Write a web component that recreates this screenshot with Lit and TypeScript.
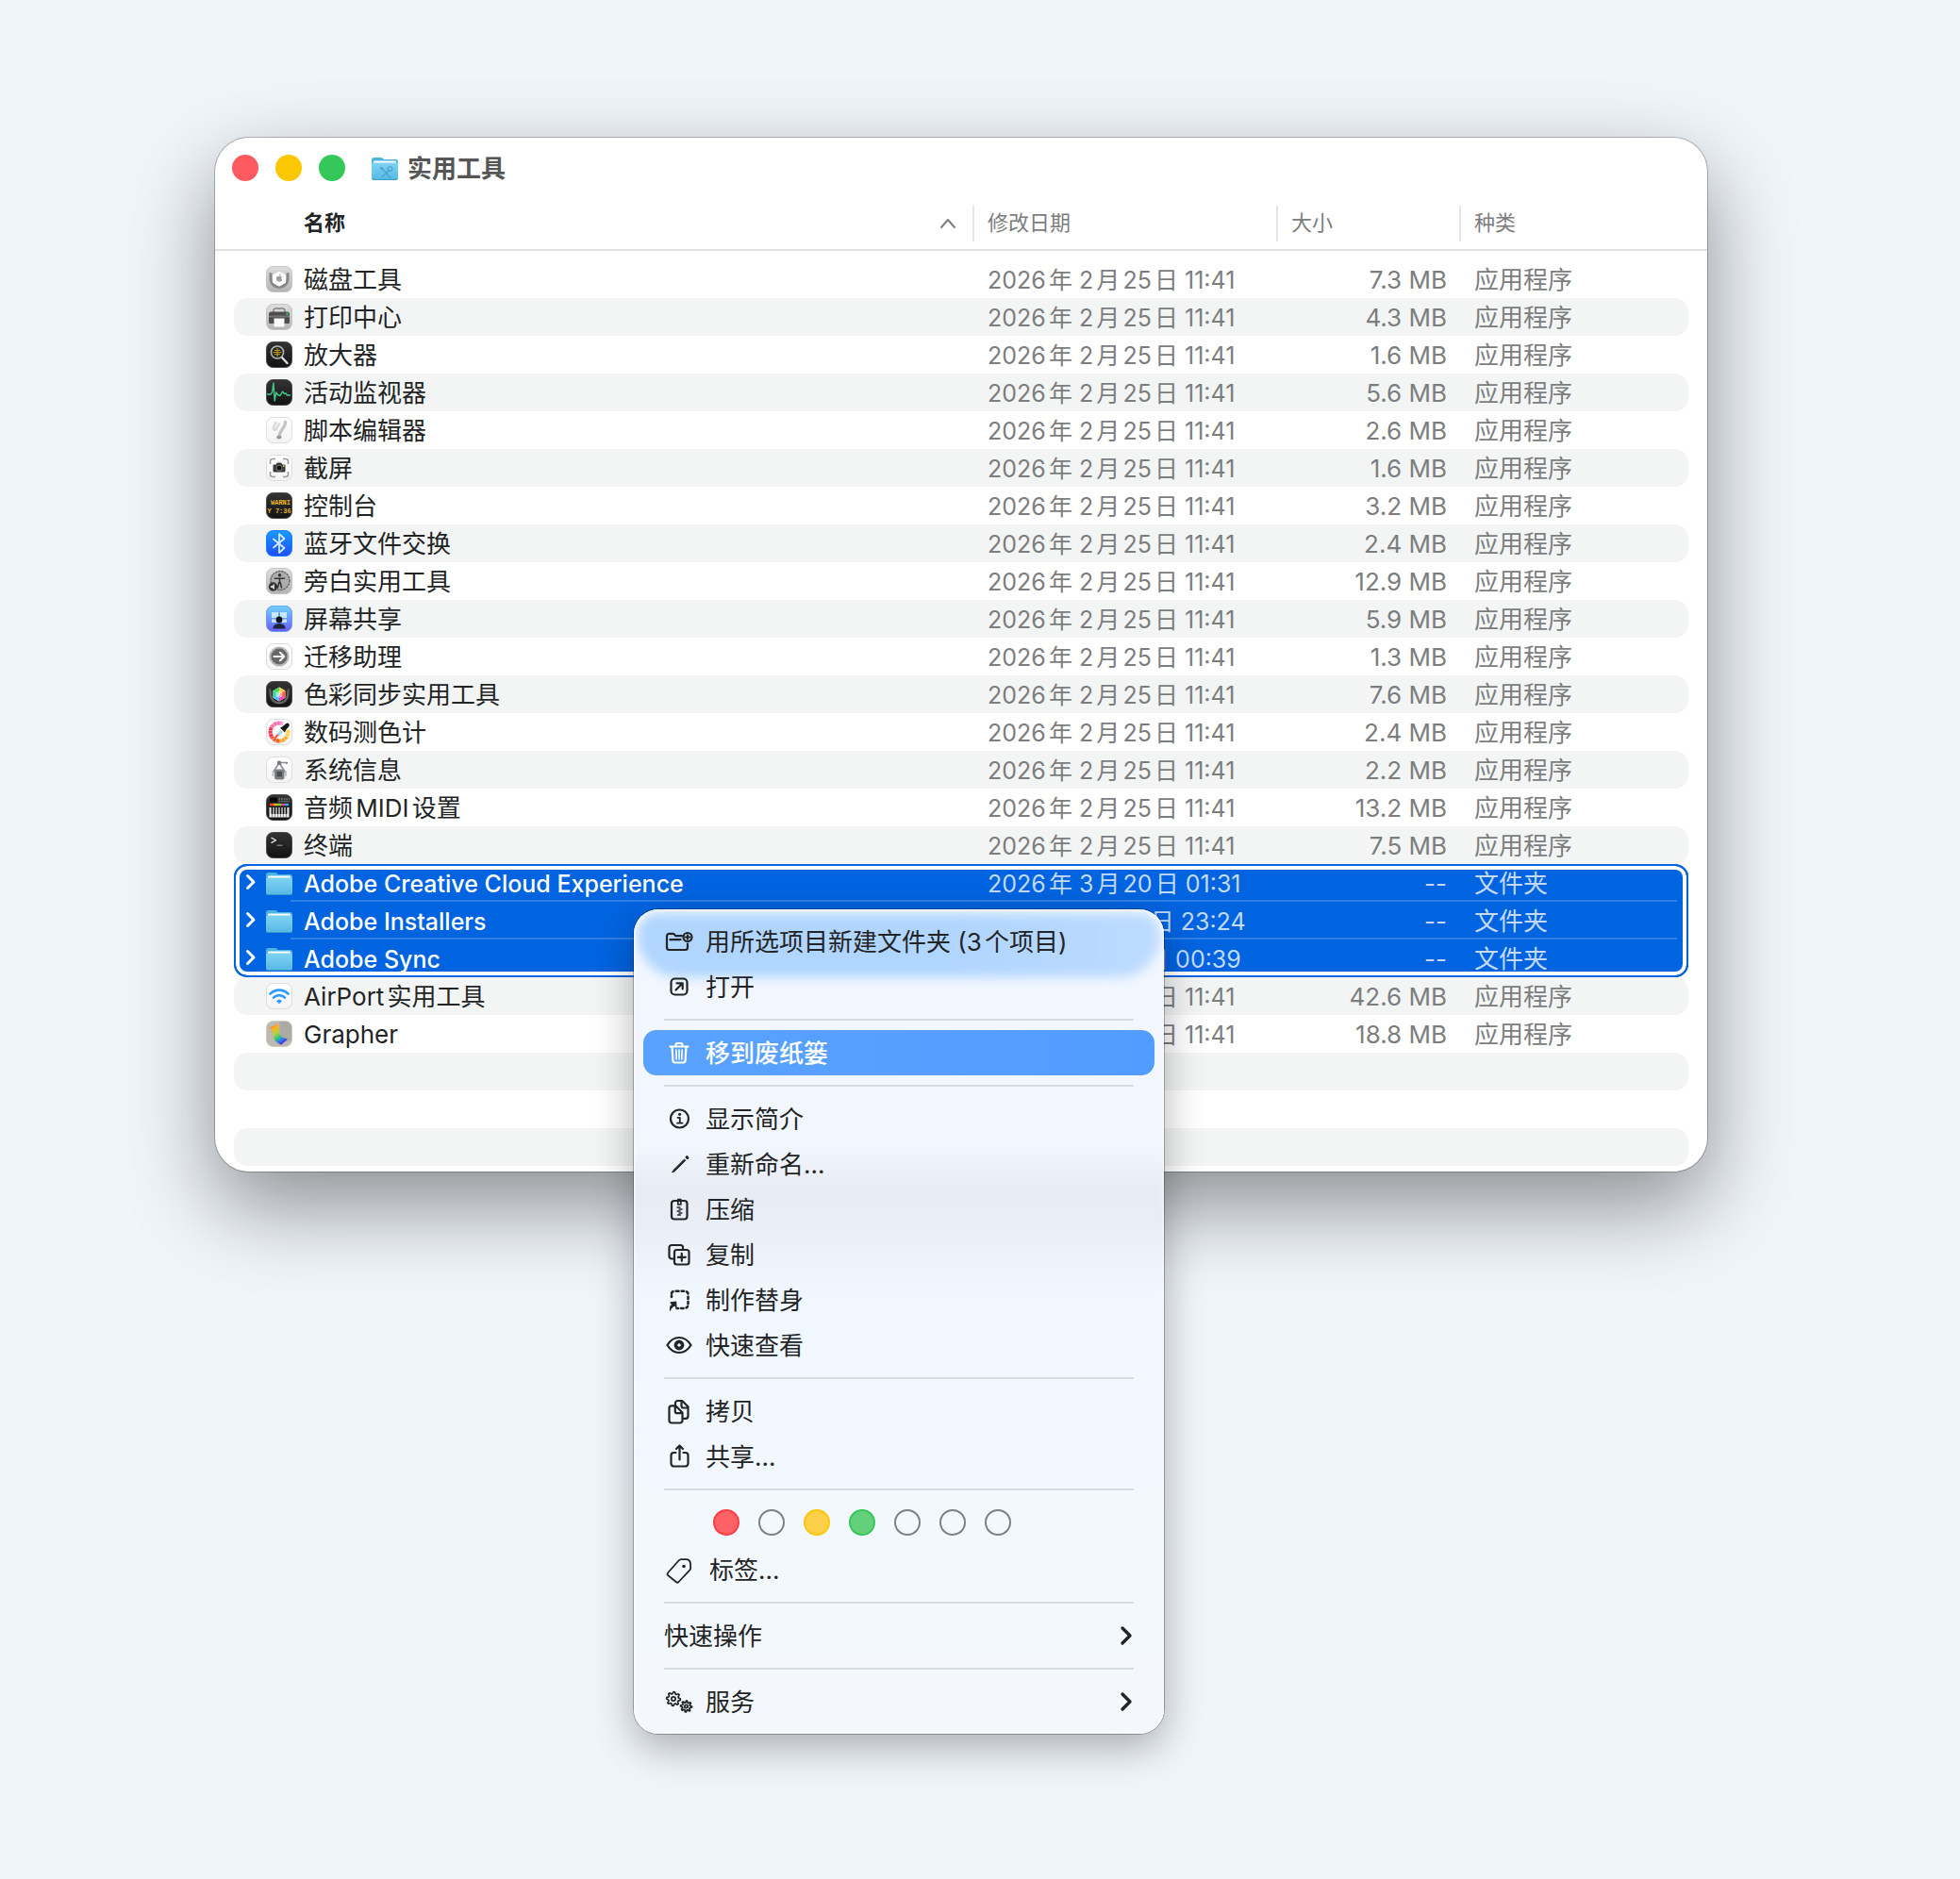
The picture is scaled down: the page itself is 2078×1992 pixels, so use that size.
import { LitElement, html, svg, css, nothing, TemplateResult } from "lit";
import { customElement, state } from "lit/decorators.js";
import { classMap } from "lit/directives/class-map.js";

interface Entry {
  name: string;
  icon: string;
  date: string;
  size: string;
  kind: string;
}

const STAMP = "2026年 2月25日 11:41";
const app = (name: string, icon: string, size: string): Entry => ({
  name,
  icon,
  date: STAMP,
  size,
  kind: "应用程序",
});
const folder = (name: string, date: string): Entry => ({
  name,
  icon: "folder",
  date,
  size: "--",
  kind: "文件夹",
});

const BEFORE: Entry[] = [
  app("磁盘工具", "disk", "7.3 MB"),
  app("打印中心", "print", "4.3 MB"),
  app("放大器", "magnify", "1.6 MB"),
  app("活动监视器", "activity", "5.6 MB"),
  app("脚本编辑器", "script", "2.6 MB"),
  app("截屏", "capture", "1.6 MB"),
  app("控制台", "console", "3.2 MB"),
  app("蓝牙文件交换", "bluetooth", "2.4 MB"),
  app("旁白实用工具", "voice", "12.9 MB"),
  app("屏幕共享", "screen", "5.9 MB"),
  app("迁移助理", "migrate", "1.3 MB"),
  app("色彩同步实用工具", "colorsync", "7.6 MB"),
  app("数码测色计", "meter", "2.4 MB"),
  app("系统信息", "sysinfo", "2.2 MB"),
  app("音频MIDI设置", "midi", "13.2 MB"),
  app("终端", "terminal", "7.5 MB"),
];
const SELECTED: Entry[] = [
  folder("Adobe Creative Cloud Experience", "2026年 3月20日 01:31"),
  folder("Adobe Installers", "2026年 3月10日 23:24"),
  folder("Adobe Sync", "2026年 3月11日 00:39"),
];
const AFTER: Entry[] = [
  app("AirPort实用工具", "airport", "42.6 MB"),
  app("Grapher", "grapher", "18.8 MB"),
];

const tile = (fill: string, edge = "#00000030") => svg`
  <rect x="2.5" y="2.5" width="27" height="27" rx="7" fill=${fill} stroke=${edge} />`;

const folderShape = svg`
  <path d="M2 7.500a2.500 2.500 0 0 1 2.500-2.500h7.200c.8 0 1.300.2 1.900.7l1.700 1.300h12.200A2.500 2.500 0 0 1 30 9.500V20H2z" fill="#4fb4e0" />
  <rect x="4" y="8.500" width="24" height="8" rx="1" fill="#fdfeff" />
  <path d="M2 11.500a1 1 0 0 1 1-1h26a1 1 0 0 1 1 1v15a2.500 2.500 0 0 1-2.500 2.500h-23A2.500 2.500 0 0 1 2 26.500z" fill="url(#g-folder)" />
  <path d="M2.500 27a2.200 2.200 0 0 0 2 1.500h23a2.200 2.200 0 0 0 2-1.500" fill="none" stroke="#3f9cc8" />`;

const ICONS: Record<string, TemplateResult> = {
  disk: svg`${tile("url(#g-gray)", "#c4c4c4")}
    <path d="M5.500 9v6.500a10.500 10.500 0 0 0 21 0V9l-3 .5v6a7.500 7.500 0 0 1-15 0v-6z" fill="#868686" />
    <path d="M16 8.200l6.600 3.600v7.600L16 23.200l-6.600-3.800v-7.600z" fill="#fff" stroke="#fff" stroke-linejoin="round" />
    <path d="M16 13c1-.8 2.500-.4 3 .5-1.100.8-1 2.400.3 3-.5 1.300-1.200 2.300-2.100 2.100-.8-.3-1.300-.3-2.100 0-1.400.3-2.800-3.200-1.800-4.900.6-1 1.700-1 2.700-.7zM16 12.300c0-1 .8-1.900 1.800-2 0 1.100-.8 2-1.800 2z" fill="#a0a0a0" />`,
  print: svg`${tile("url(#g-gray)", "#c4c4c4")}
    <rect x="10" y="7" width="12" height="7" rx="2" fill="#d4d4d4" stroke="#5d5d5d" />
    <path d="M7.500 10.500h17a2.500 2.500 0 0 1 2.500 2.500v8.500a1.500 1.500 0 0 1-1.500 1.500h-19A1.500 1.500 0 0 1 5 21.500V13a2.500 2.500 0 0 1 2.500-2.500z" fill="#4d4d4d" />
    <rect x="5" y="14.500" width="22" height="2" fill="#757575" />
    <circle cx="24.500" cy="12.800" r="1.300" fill="#2fc45c" />
    <rect x="10.500" y="17.500" width="11" height="9" fill="#fafafa" />`,
  magnify: svg`${tile("url(#g-dark)", "#4b4b4b")}
    <path d="M18.500 18.500l6 6.500" stroke="#dcdcdc" stroke-width="2.400" stroke-linecap="round" />
    <circle cx="14" cy="13.500" r="6.600" fill="#2b2b27" stroke="#b9b9b9" stroke-width="1.500" />
    <path d="M9.500 13.500h9M14 9v9M11 11.500h6M11 15.500h6" stroke="#b3921a" stroke-width="1.200" />`,
  activity: svg`${tile("url(#g-dark)", "#4b4b4b")}
    <path d="M3 18h4l1.500-2L10 6l1.200 19 1.600-9 1.700 2.500 2.500 1 2.500-4.500 2 2.500 1.500-.5 1.500 2H28" fill="none" stroke="#3fc98a" stroke-width="1.400" stroke-linejoin="round" />`,
  script: svg`${tile("url(#g-white)", "#dedede")}
    <path d="M12.500 8c-2 3-3.500 6-2 7.500 2 1.500 3-3 5.500-6" fill="none" stroke="#dadada" stroke-width="2.600" stroke-linecap="round" />
    <path d="M22.500 7.500c1 4-5 7.500-6.500 14.500" fill="none" stroke="#c4c4c4" stroke-width="3.400" stroke-linecap="round" />
    <ellipse cx="15.800" cy="23.500" rx="2.600" ry="2" fill="#989898" />`,
  capture: svg`${tile("url(#g-white)", "#dedede")}
    <path d="M6.500 12V9a2.500 2.500 0 0 1 2.500-2.500h3M20 6.500h3A2.500 2.500 0 0 1 25.500 9v3M25.500 20v3a2.500 2.500 0 0 1-2.500 2.500h-3M12 25.500H9A2.500 2.500 0 0 1 6.500 23v-3" fill="none" stroke="#9c9c9c" stroke-width="1.600" />
    <path d="M10.500 12.500h2.200l1.100-2h4.400l1.100 2h2.200a1 1 0 0 1 1 1v6a1 1 0 0 1-1 1h-11a1 1 0 0 1-1-1v-6a1 1 0 0 1 1-1z" fill="#3a3a3a" />
    <circle cx="16" cy="16" r="3" fill="#111" stroke="#777" />
    <circle cx="20.800" cy="14" r=".9" fill="#e9c63d" />`,
  console: svg`${tile("url(#g-dark)", "#4b4b4b")}
    <text x="7" y="14.500" class="tiny">WARNI</text>
    <text x="3.500" y="23.500" class="tiny">Y 7:36</text>`,
  bluetooth: svg`${tile("url(#g-blue)", "#1f7bf5")}
    <path d="M10 11.500l11.500 9.500-5.500 5V6l5.500 5L10 20.500" fill="none" stroke="#d9ecff" stroke-width="1.700" stroke-linejoin="round" stroke-linecap="round" />`,
  voice: svg`${tile("url(#g-gray)", "#c4c4c4")}
    <circle cx="17" cy="15.500" r="10" fill="#adadad" stroke="#666" stroke-width="1.400" stroke-dasharray="2.500 .7" />
    <circle cx="16.500" cy="9.800" r="1.700" fill="#333" />
    <path d="M11.500 13.200h10M16.500 13.200v4.800M15.800 17.500l-1.300 5.500M17.200 17.500l1.300 5.500" stroke="#333" stroke-width="1.500" stroke-linecap="round" />
    <circle cx="9.500" cy="22" r="4.700" fill="#333" />
    <path d="M7 21h1.500l2.500-2v6l-2.500-2H7z" fill="#d5d5d5" />`,
  screen: svg`${tile("url(#g-screen)", "#6b9df0")}
    <path d="M8 9h7v6H8zM17 9h7v6h-7zM8 16.500h7V20H8zM17 16.500h7V20h-7z" fill="#d7f2ff" opacity=".85" />
    <circle cx="16" cy="17" r="3.400" fill="#10131c" />
    <path d="M9.500 26.500c0-4 3-5.300 6.500-5.300s6.500 1.300 6.500 5.300z" fill="#1c2440" />`,
  migrate: svg`${tile("url(#g-white)", "#dedede")}
    <circle cx="16" cy="16" r="10.500" fill="#b5b5b5" />
    <circle cx="16" cy="16" r="8.500" fill="#686868" />
    <path d="M10.500 16h10.500M17 11.800l4.300 4.200-4.300 4.200" fill="none" stroke="#fff" stroke-width="2" stroke-linecap="round" stroke-linejoin="round" />`,
  colorsync: svg`${tile("url(#g-dark)", "#4b4b4b")}
    <path d="M5.500 9v7a10.500 10.500 0 0 0 21 0V9c-2 2-2.500 4-2.500 7a8 8 0 0 1-16 0c0-3-.5-5-2.500-7z" fill="#626262" />
    <path d="M16 8.500l6.500 3.700v7.600L16 23.500l-6.500-3.700v-7.600z" fill="#f7f7f7" />
    <path d="M16 8.500V16l-6.500-3.800z" fill="#35dd55" /><path d="M16 8.500V16l6.500-3.800z" fill="#ffc94a" />
    <path d="M9.500 12.200L16 16l-6.500 3.800z" fill="#38d9a6" /><path d="M22.500 12.200L16 16l6.500 3.800z" fill="#ff5a3d" />
    <path d="M9.500 19.800L16 16v7.500z" fill="#4fc3f5" /><path d="M22.500 19.800L16 16v7.500z" fill="#f24ab8" />
    <circle cx="16" cy="16" r="3.500" fill="#fff" opacity=".5" />`,
  meter: svg`${tile("url(#g-white)", "#dedede")}
    <path d="M16 6.500a9.500 9.500 0 0 1 4 .9" stroke="#ff8bd0" class="arc" />
    <path d="M8 11a9.500 9.500 0 0 1 8-4.500" stroke="#ff6aa8" class="arc" />
    <path d="M8 21a9.500 9.500 0 0 1 0-10" stroke="#ff2f55" class="arc" />
    <path d="M16 25.500A9.500 9.500 0 0 1 8 21" stroke="#ff5a2b" class="arc" />
    <path d="M24 21a9.500 9.500 0 0 1-8 4.500" stroke="#ffa62b" class="arc" />
    <path d="M25.200 14a9.500 9.500 0 0 1-1.200 7" stroke="#ffd23c" class="arc" />
    <path d="M10.500 22l7-7.500 2 2-7.500 6.500z" fill="#ff4c3b" />
    <path d="M14 18l4-4 2 2-4 4z" fill="#9fdcf5" />
    <path d="M17 11.500l5 5 1-2.500 3.200-3.800a2 2 0 0 0-3-2.900l-3.700 3z" fill="#181818" />`,
  sysinfo: svg`${tile("url(#g-white)", "#dedede")}
    <path d="M15.500 9.500L10 18M16.500 9.500L22 18M16 8.500h8" stroke="#8f9296" stroke-width="1.700" stroke-linecap="round" />
    <circle cx="16" cy="8.800" r="2.200" fill="#73777b" />
    <circle cx="24" cy="8.800" r="1" fill="#73777b" />
    <rect x="11" y="15.500" width="10.500" height="11" rx="2.500" fill="#7b7f84" />
    <rect x="13.500" y="18" width="5.500" height="5.500" rx="1" fill="#4a4d51" />
    <path d="M9.500 17.500v5.500M23 17.500v5.500" stroke="#b4b7ba" stroke-width="1.600" />`,
  midi: svg`${tile("url(#g-dark)", "#4b4b4b")}
    <rect x="6" y="5.500" width="8" height="5" fill="#050505" />
    <path d="M15.500 7H27M15.500 9.500H27" stroke="#777" stroke-width="1.500" stroke-dasharray="1.800 .8" />
    <path d="M6 13h4" stroke="#ff3a2e" stroke-width="2.400" /><path d="M10 13h4" stroke="#ffa51f" stroke-width="2.400" />
    <path d="M14 13h4" stroke="#6fdc39" stroke-width="2.400" /><path d="M18 13h4" stroke="#ff3f8e" stroke-width="2.400" />
    <path d="M22 13h4" stroke="#2aa8ff" stroke-width="2.400" />
    <rect x="5.500" y="16" width="21" height="10.500" fill="#e9e9e9" />
    <path d="M8.500 16v7M11.500 16v7M14.500 16v7M17.500 16v7M20.500 16v7M23.500 16v7" stroke="#111" stroke-width="1.700" />
    <path d="M8.500 23v3.500M11.500 23v3.500M14.500 23v3.500M17.500 23v3.500M20.500 23v3.500M23.500 23v3.500" stroke="#666" stroke-width=".6" />`,
  terminal: svg`${tile("url(#g-dark)", "#4b4b4b")}
    <path d="M7.500 8l5 2.800-5 2.800" fill="none" stroke="#eee" stroke-width="1.300" stroke-linejoin="round" />
    <path d="M13.500 16.200h6" stroke="#8b8b8b" stroke-width="1.200" />`,
  airport: svg`${tile("url(#g-white)", "#dedede")}
    <path d="M6.500 13.500a13.500 13.500 0 0 1 19 0M10 17.600a8.500 8.500 0 0 1 12 0" fill="none" stroke="#2e9bff" stroke-width="2.600" stroke-linecap="round" />
    <path d="M13 21.200a4.300 4.300 0 0 1 6 0l-3 3z" fill="#2e9bff" />`,
  grapher: svg`${tile("#bdb9b0", "#cfccc6")}
    <path d="M16.500 3h6.500a6 6 0 0 1 6 6v14l-12.500 3z" fill="#adaaa3" />
    <path d="M6 9.500l9-4c1.500 4-.5 7 1.500 11 1.500 3 4.500 4 8.500 5l-6.500 6c-3.500-.5-7.500-4-8.500-8s-.5-7-4-10z" fill="url(#g-rain)" />`,
  folder: folderShape,
  utilities: svg`${folderShape}
    <path d="M12.500 16l9.500 10.500M20.500 18.500l-7 6.500" fill="none" stroke="#3f8fc0" stroke-width="1.500" stroke-linecap="round" opacity=".6" />
    <circle cx="21.500" cy="17" r="2.400" fill="none" stroke="#3f8fc0" stroke-width="1.400" opacity=".6" />
    <circle cx="12.500" cy="16.500" r="1.800" fill="#3f8fc0" opacity=".5" />`,
};

const DEFS = html`<svg class="defs" width="0" height="0" aria-hidden="true">
  <defs>
    <linearGradient id="g-gray" x2="0" y2="1"><stop stop-color="#dedede" /><stop offset="1" stop-color="#b3b3b3" /></linearGradient>
    <linearGradient id="g-white" x2="0" y2="1"><stop stop-color="#ffffff" /><stop offset="1" stop-color="#f3f3f4" /></linearGradient>
    <linearGradient id="g-dark" x2="0" y2="1"><stop stop-color="#333333" /><stop offset="1" stop-color="#131313" /></linearGradient>
    <linearGradient id="g-blue" x2="0" y2="1"><stop stop-color="#1a9bff" /><stop offset="1" stop-color="#1c4dfb" /></linearGradient>
    <linearGradient id="g-screen" x2="0" y2="1"><stop stop-color="#6fd3ff" /><stop offset="1" stop-color="#6a5cf5" /></linearGradient>
    <linearGradient id="g-folder" x2="0" y2="1"><stop stop-color="#7fd3f3" /><stop offset="1" stop-color="#54b8e4" /></linearGradient>
    <linearGradient id="g-rain" x2=".6" y2="1">
      <stop stop-color="#ff4a1c" /><stop offset=".25" stop-color="#ffb01f" /><stop offset=".5" stop-color="#a9d637" />
      <stop offset=".7" stop-color="#34c27a" /><stop offset=".85" stop-color="#2f7df0" /><stop offset="1" stop-color="#4f30e0" />
    </linearGradient>
  </defs>
</svg>`;

const gear = (cx: number, cy: number, r: number) => {
  let d = "";
  for (let i = 0; i < 32; i++) {
    const rr = i % 4 < 2 ? r + 1 : r - 1;
    const a = (i / 32) * Math.PI * 2;
    d += `${i ? "L" : "M"}${(cx + rr * Math.cos(a)).toFixed(2)} ${(cy + rr * Math.sin(a)).toFixed(2)}`;
  }
  return svg`<path d=${d + "z"} stroke-width="1.700" /><circle cx=${cx} cy=${cy} r=${r / 3} stroke-width="1.700" />`;
};

const GLYPHS: Record<string, TemplateResult> = {
  newFolder: svg`<path d="M19 10.200H12.500l-1.700-1.700c-.4-.4-.8-.6-1.400-.6H5.500A2.500 2.500 0 0 0 3 10.400v12.100A2.500 2.500 0 0 0 5.500 25h17a2.500 2.500 0 0 0 2.500-2.500V18.500M6.500 14.200h11" />
    <circle cx="25" cy="11.500" r="4.500" /><path d="M25 9.200v4.600M22.700 11.500h4.600" stroke-width="1.900" />`,
  open: svg`<rect x="7.500" y="7.500" width="17" height="17" rx="4" /><path d="M12.500 19.500l6.500-6.500M13.500 12.300h6.200V18.500" />`,
  trash: svg`<path d="M6.500 9.500h19M12.500 9V7.500A1.500 1.500 0 0 1 14 6h4a1.500 1.500 0 0 1 1.500 1.500V9M8.500 10l1 14.700a2 2 0 0 0 2 1.800h9a2 2 0 0 0 2-1.800l1-14.700" />
    <path d="M12.800 13l.4 10M16 13v10M19.200 13l-.4 10" stroke-width="1.600" />`,
  info: svg`<circle cx="16.500" cy="16" r="9.500" /><path d="M14.500 14.800h2.300v5.700M14 20.700h5.500" stroke-width="1.800" /><circle cx="16.600" cy="11.300" r="1.600" class="solid" />`,
  pencil: svg`<path d="M10 22.500L21.500 11l1.300 1.300L11.300 23.800l-2.300.9z" class="solid edge" /><path d="M24.200 8.800l.6.600" stroke-width="3.200" />`,
  zip: svg`<rect x="8" y="7" width="16.500" height="19.500" rx="3" /><path d="M14.800 5.500h3v5.500h-3z" stroke-width="1.700" />
    <path d="M14 14h3M16 16h3M14 18h3M16 20h3M14.500 22h3" stroke-width="1.300" />`,
  duplicate: svg`<path d="M10.500 20.500H8A2.500 2.500 0 0 1 5.500 18V8.500A2.500 2.500 0 0 1 8 6h9.500A2.500 2.500 0 0 1 20 8.500V10.500" /><rect x="11" y="11" width="15.500" height="15.500" rx="2.500" /><path d="M18.800 14.800v8M14.800 18.800h8" />`,
  alias: svg`<path d="M8 13v-1.500M8 9.300a3 3 0 0 1 1.500-2.200M12.700 6.700h2.800M18.700 6.700h2.300M24 7.300a3 3 0 0 1 1.500 2.200M25.500 12.700v2.300M25.500 18v2.300M25 23a3 3 0 0 1-1.500 1.500M20.500 25h-2.300M15.200 25h-1.700" stroke-width="2.600" />
    <path d="M6.500 27c-.5-3 .3-5 2-6l-1.700-2.200 6-.8.2 6-1.900-1.700c-1.700.7-3 2-4.600 4.700z" class="solid edge" />`,
  eye: svg`<path d="M3.500 16c3-5 7.300-8 12.500-8s9.500 3 12.500 8c-3 5-7.300 8-12.500 8S6.500 21 3.500 16z" /><circle cx="16" cy="16" r="3.600" stroke-width="3.600" />`,
  copy: svg`<path d="M12 9.500V7.500A2.500 2.500 0 0 1 14.500 5h4.700l6.300 6.300v10A2.500 2.500 0 0 1 23 23.800h-2M18.500 5.500v5a2 2 0 0 0 2 2H25" />
    <path d="M8 10.300h4.200l7.300 7.200v8.500a2.500 2.500 0 0 1-2.500 2.500H8A2.500 2.500 0 0 1 5.500 26V12.800A2.500 2.500 0 0 1 8 10.300zM11.800 10.500v5.700a2 2 0 0 0 2 2h5.500" />`,
  share: svg`<path d="M12.500 12h-2a3 3 0 0 0-3 3v8.500a3 3 0 0 0 3 3h12a3 3 0 0 0 3-3V15a3 3 0 0 0-3-3h-2M16.500 19.500V5M13 8l3.500-3.500L20 8" />`,
  tag: svg`<path d="M4 19.500L15.500 6.500a4 4 0 0 1 2.700-1.300l4.800-.1a4.500 4.500 0 0 1 5 4.500l.2 4.300a4 4 0 0 1-1.200 3L15.500 29a2 2 0 0 1-2.800 0l-8.600-7a1.800 1.800 0 0 1-.1-2.500z" stroke-width="1.800" /><circle cx="21" cy="12.500" r="1.800" class="solid" />`,
  gears: svg`${gear(10, 13, 6.4)}${gear(23.500, 21, 5)}`,
};

interface Item {
  label: string;
  glyph?: string;
  more?: boolean;
}
const GROUPS: Item[][] = [
  [
    { label: "用所选项目新建文件夹 (3个项目)", glyph: "newFolder" },
    { label: "打开", glyph: "open" },
  ],
  [{ label: "移到废纸篓", glyph: "trash" }],
  [
    { label: "显示简介", glyph: "info" },
    { label: "重新命名...", glyph: "pencil" },
    { label: "压缩", glyph: "zip" },
    { label: "复制", glyph: "duplicate" },
    { label: "制作替身", glyph: "alias" },
    { label: "快速查看", glyph: "eye" },
  ],
  [
    { label: "拷贝", glyph: "copy" },
    { label: "共享...", glyph: "share" },
  ],
  [{ label: "标签...", glyph: "tag" }],
  [{ label: "快速操作", more: true }],
  [{ label: "服务", glyph: "gears", more: true }],
];
const TAGS = [
  { name: "红色", tone: "red", on: true },
  { name: "橙色", tone: "orange", on: false },
  { name: "黄色", tone: "yellow", on: true },
  { name: "绿色", tone: "green", on: true },
  { name: "蓝色", tone: "blue", on: false },
  { name: "紫色", tone: "purple", on: false },
  { name: "灰色", tone: "gray", on: false },
];

@customElement("app-root")
export class AppRoot extends LitElement {
  @state() private active = "移到废纸篓";

  static styles = css`
    :host {
      display: block;
      box-sizing: border-box;
      min-height: 100vh;
      padding: 146px 268px 146px 228px;
      background: #f0f5fa;
      color: #222425;
      font: 400 26px/40px Inter, "Noto Sans CJK SC", sans-serif;
      text-autospace: normal;
    }
    *,
    *::before,
    *::after {
      box-sizing: border-box;
    }
    button {
      margin: 0;
      padding: 0;
      border: 0;
      background: none;
      color: inherit;
      font: inherit;
      text-align: left;
      text-autospace: inherit;
    }
    .defs {
      position: absolute;
    }
    .window {
      position: relative;
      padding-bottom: 6px;
      border-radius: 36px;
      background: #fff;
      box-shadow: 0 0 0 1px #0000003d, 0 36px 90px #0000006b;
    }
    .titlebar {
      display: flex;
      align-items: center;
      height: 64px;
      padding-left: 18px;
    }
    .lights {
      display: flex;
      gap: 18px;
      margin-right: 26px;
    }
    .light {
      width: 28px;
      height: 28px;
      border-radius: 50%;
    }
    .light.close {
      background: #ff5a5f;
    }
    .light.min {
      background: #fbc700;
    }
    .light.zoom {
      background: #34c759;
    }
    .titlebar h1 {
      margin: 0 0 0 8px;
      padding-top: 2px;
      font-size: 26px;
      font-weight: 700;
      color: #555;
    }
    .icon {
      display: block;
      flex: none;
      width: 32px;
      height: 32px;
    }
    .tiny {
      font: 700 7px "Liberation Mono", monospace;
      fill: #e8b825;
    }
    .arc {
      fill: none;
      stroke-width: 4;
      stroke-dasharray: 3 0.5;
    }

    table {
      width: 100%;
      table-layout: fixed;
      border-collapse: separate;
      border-spacing: 0;
    }
    .c-date {
      width: 322px;
    }
    .c-size {
      width: 194px;
    }
    .c-kind {
      width: 263px;
    }
    th {
      height: 56px;
      padding: 0;
      border-bottom: 2px solid #e0e1e1;
      font-size: 22px;
      font-weight: 400;
      line-height: 36px;
      color: #7c7d7e;
      text-align: left;
    }
    .head {
      display: flex;
      align-items: center;
      justify-content: space-between;
      width: 100%;
      height: 38px;
      padding: 0 0 2px 14px;
      border-left: 2px solid #e4e5e5;
    }
    .head.first {
      padding: 0 18px 2px 94px;
      border-left: 0;
      font-weight: 700;
      color: #222425;
    }
    .caret {
      width: 16px;
      height: 16px;
      fill: none;
      stroke: #7c7d7e;
      stroke-width: 2;
      stroke-linecap: round;
      stroke-linejoin: round;
    }
    thead + tbody::before {
      content: "";
      display: block;
      height: 10px;
    }
    td {
      height: 40px;
      padding: 2px 0 0 16px;
      background-clip: padding-box;
      line-height: 38px;
      color: #7c7d7e;
      white-space: nowrap;
    }
    td:first-child {
      padding: 0;
      border-left: 20px solid transparent;
      border-radius: 34px 0 0 34px / 14px 0 0 14px;
      color: #222425;
    }
    td:last-child {
      border-right: 20px solid transparent;
      border-radius: 0 34px 34px 0 / 0 14px 14px 0;
    }
    td.date {
      font-size: 25px;
    }
    td.size {
      padding: 2px 13px 0 0;
      text-align: right;
    }
    .stripe td {
      background-color: #f3f5f4;
    }
    .name {
      display: flex;
      align-items: center;
      height: 40px;
      padding-left: 8px;
    }
    .title {
      padding-top: 2px;
    }
    .toggle {
      flex: none;
      width: 20px;
      height: 32px;
      margin-right: 4px;
    }
    .toggle svg {
      display: block;
      width: 20px;
      height: 32px;
      fill: none;
      stroke: #fff;
      stroke-width: 3;
      stroke-linecap: round;
      stroke-linejoin: round;
    }
    .name .icon {
      margin-right: 10px;
    }
    .picked {
      position: relative;
    }
    .picked::after {
      content: "";
      position: absolute;
      inset: 0 20px;
      border: 2px solid #0064e1;
      border-radius: 14px;
      box-shadow: inset 0 0 0 4px #fff;
      pointer-events: none;
    }
    .picked td {
      background-color: #0064e1;
      background-origin: padding-box;
      background-position: left bottom;
      background-repeat: no-repeat;
      background-size: 100% 2px;
      border-radius: 0;
      color: #c3dafa;
    }
    .picked tr:not(:last-child) td {
      background-image: linear-gradient(#ffffff2e, #ffffff2e);
    }
    .picked td:first-child {
      background-position: right bottom;
      background-size: calc(100% - 60px) 2px;
      color: #fff;
      font-size: 25px;
      font-weight: 500;
    }
    .picked td:last-child {
      background-size: calc(100% - 12px) 2px;
    }
    .picked tr:first-child td:first-child {
      border-top-left-radius: 34px 14px;
    }
    .picked tr:first-child td:last-child {
      border-top-right-radius: 34px 14px;
    }
    .picked tr:last-child td:first-child {
      border-bottom-left-radius: 34px 14px;
    }
    .picked tr:last-child td:last-child {
      border-bottom-right-radius: 34px 14px;
    }

    .menu {
      position: absolute;
      left: 444px;
      top: 818px;
      width: 562px;
      padding: 10px;
      border-radius: 26px;
      background: linear-gradient(#f2f7ff 0 250px, #e7ebf4 296px, #e9edf6 330px, #f1f7ff 410px, #f2f8fe 640px, #f4f8fc);
      box-shadow: 0 0 0 1px #00000045, 0 14px 44px #0000004d;
    }
    .menu::before {
      content: "";
      position: absolute;
      inset: 4px 4px auto;
      height: 68px;
      border-radius: 22px 22px 44px 44px;
      background: linear-gradient(90deg, #b0d5ff 60%, #bcdbff);
      filter: blur(6px);
      clip-path: inset(-4px -4px -30px round 26px 26px 0 0);
    }
    .menu::after {
      content: "";
      position: absolute;
      inset: 0;
      border-radius: 26px;
      box-shadow: inset 0 0 3px 1px #ffffffcc;
      pointer-events: none;
    }
    .item {
      position: relative;
      display: flex;
      align-items: center;
      gap: 12px;
      width: 100%;
      height: 48px;
      padding: 0 22px;
      border-radius: 14px;
    }
    .item.tags {
      gap: 16px;
    }
    .item.active {
      background: linear-gradient(90deg, #5aa2ff, #529cff);
      color: #fff;
      font-weight: 500;
    }
    .glyph {
      flex: none;
      width: 32px;
      height: 32px;
      fill: none;
      stroke: currentColor;
      stroke-width: 2.200;
      stroke-linecap: round;
      stroke-linejoin: round;
    }
    .glyph .solid {
      fill: currentColor;
      stroke-width: 0;
    }
    .glyph .edge {
      stroke-width: 1;
    }
    .label {
      flex: 1;
      padding-top: 2px;
      white-space: nowrap;
    }
    .more {
      flex: none;
      width: 16px;
      height: 24px;
      fill: none;
      stroke: currentColor;
      stroke-width: 3.400;
      stroke-linecap: round;
      stroke-linejoin: round;
    }
    hr {
      height: 2px;
      margin: 10px 22px;
      border: 0;
      background: #d6dce4;
    }
    .colors {
      display: flex;
      align-items: center;
      gap: 20px;
      height: 48px;
      margin: 0 0 2px;
      padding: 0 0 0 74px;
      border: 0;
    }
    .swatch {
      appearance: none;
      width: 28px;
      height: 28px;
      margin: 0;
      border: 2px solid #7d8084;
      border-radius: 50%;
    }
    .red:checked {
      border-color: #ff3d43;
      background: #ff6266;
    }
    .yellow:checked {
      border-color: #fcc60a;
      background: #fdd04a;
    }
    .green:checked {
      border-color: #36c759;
      background: #65d07c;
    }
  `;

  private icon(name: string) {
    return html`<svg class="icon" viewBox="0 0 32 32" fill="none" aria-hidden="true">${ICONS[name]}</svg>`;
  }

  private row(entry: Entry, striped: boolean) {
    const isFolder = entry.icon === "folder";
    return html`<tr class=${classMap({ stripe: striped })}>
      <td>
        <div class="name">
          ${isFolder
            ? html`<button class="toggle" aria-label="展开">
                <svg viewBox="0 0 20 32"><path d="M6.500 8.500l6.500 6.500-6.500 6.500" /></svg>
              </button>`
            : html`<span class="toggle"></span>`}
          ${this.icon(entry.icon)}<span class="title">${entry.name}</span>
        </div>
      </td>
      <td class="date">${entry.date}</td>
      <td class="size">${entry.size}</td>
      <td>${entry.kind}</td>
    </tr>`;
  }

  private blank(striped: boolean) {
    return html`<tr class=${classMap({ stripe: striped })}><td></td><td></td><td></td><td></td></tr>`;
  }

  private item(item: Item) {
    return html`<button
      role="menuitem"
      class=${classMap({ item: true, active: item.label === this.active, tags: item.glyph === "tag" })}
      @mouseenter=${() => (this.active = item.label)}
    >
      ${item.glyph ? html`<svg class="glyph" viewBox="0 0 32 32" aria-hidden="true">${GLYPHS[item.glyph]}</svg>` : nothing}
      <span class="label">${item.label}</span>
      ${item.more ? html`<svg class="more" viewBox="0 0 16 24" aria-hidden="true"><path d="M4 4l8 8-8 8" /></svg>` : nothing}
    </button>`;
  }

  private colors() {
    return html`<fieldset class="colors" aria-label="标签颜色">
      ${TAGS.map(
        (t) => html`<input type="checkbox" class="swatch ${t.tone}" aria-label=${t.name} .checked=${t.on} />`,
      )}
    </fieldset>`;
  }

  render() {
    return html`
      ${DEFS}
      <main class="window">
        <header class="titlebar">
          <div class="lights">
            <button class="light close" aria-label="关闭"></button>
            <button class="light min" aria-label="最小化"></button>
            <button class="light zoom" aria-label="缩放"></button>
          </div>
          ${this.icon("utilities")}
          <h1>实用工具</h1>
        </header>
        <table>
          <colgroup>
            <col />
            <col class="c-date" />
            <col class="c-size" />
            <col class="c-kind" />
          </colgroup>
          <thead>
            <tr>
              <th>
                <button class="head first">
                  名称<svg class="caret" viewBox="0 0 16 16" aria-hidden="true"><path d="M1 13l7-8 7 8" /></svg>
                </button>
              </th>
              <th><button class="head">修改日期</button></th>
              <th><button class="head">大小</button></th>
              <th><button class="head">种类</button></th>
            </tr>
          </thead>
          <tbody>
            ${BEFORE.map((e, i) => this.row(e, i % 2 === 1))}
          </tbody>
          <tbody class="picked">
            ${SELECTED.map((e) => this.row(e, false))}
          </tbody>
          <tbody>
            ${AFTER.map((e, i) => this.row(e, i % 2 === 0))}
            ${[true, false, true].map((s) => this.blank(s))}
          </tbody>
        </table>
        <div class="menu" role="menu">
          ${GROUPS.map(
            (group, i) => html`${i ? html`<hr />` : nothing}
              ${group[0].glyph === "tag" ? this.colors() : nothing}
              ${group.map((it) => this.item(it))}`,
          )}
        </div>
      </main>
    `;
  }
}
